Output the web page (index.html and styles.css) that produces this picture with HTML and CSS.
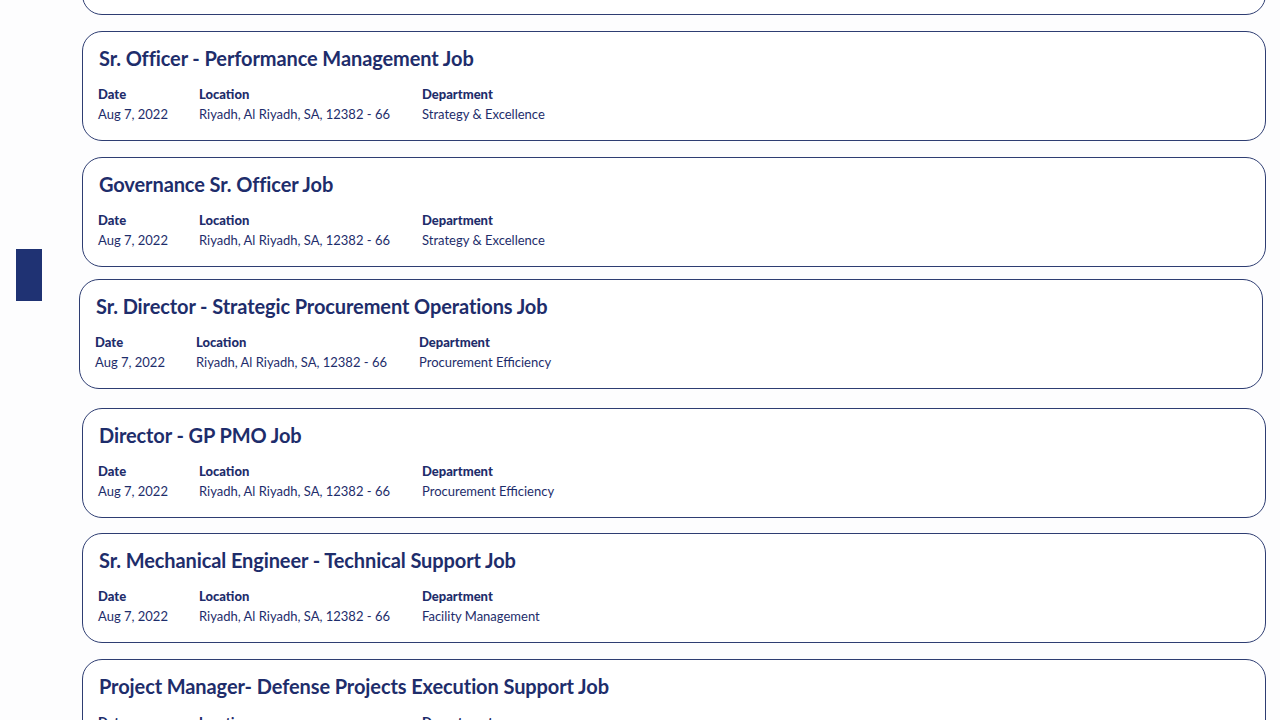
FILE: index.html
```html
<!DOCTYPE html>
<html>
<head>
  <title>Jobs</title>
  <link rel="stylesheet" href="styles.css">
</head>
<body>
  <div class="page">
    <div class="side">
      <div class="side-marker"></div>
    </div>
    <div class="job-list">
      <div class="job-card">
        <h3 class="job-title">Sr. Specialist - Strategy Job</h3>
        <div class="job-meta">
          <div class="meta-col col-date"><div class="meta-label">Date</div><div class="meta-value">Aug 7, 2022</div></div>
          <div class="meta-col col-loc"><div class="meta-label">Location</div><div class="meta-value">Riyadh, Al Riyadh, SA, 12382 - 66</div></div>
          <div class="meta-col"><div class="meta-label">Department</div><div class="meta-value">Strategy &amp; Excellence</div></div>
        </div>
      </div>
      <div class="job-card">
        <h3 class="job-title">Sr. Officer - Performance Management Job</h3>
        <div class="job-meta">
          <div class="meta-col col-date"><div class="meta-label">Date</div><div class="meta-value">Aug 7, 2022</div></div>
          <div class="meta-col col-loc"><div class="meta-label">Location</div><div class="meta-value">Riyadh, Al Riyadh, SA, 12382 - 66</div></div>
          <div class="meta-col"><div class="meta-label">Department</div><div class="meta-value">Strategy &amp; Excellence</div></div>
        </div>
      </div>
      <div class="job-card">
        <h3 class="job-title">Governance Sr. Officer Job</h3>
        <div class="job-meta">
          <div class="meta-col col-date"><div class="meta-label">Date</div><div class="meta-value">Aug 7, 2022</div></div>
          <div class="meta-col col-loc"><div class="meta-label">Location</div><div class="meta-value">Riyadh, Al Riyadh, SA, 12382 - 66</div></div>
          <div class="meta-col"><div class="meta-label">Department</div><div class="meta-value">Strategy &amp; Excellence</div></div>
        </div>
      </div>
      <div class="job-card is-hover">
        <h3 class="job-title">Sr. Director - Strategic Procurement Operations Job</h3>
        <div class="job-meta">
          <div class="meta-col col-date"><div class="meta-label">Date</div><div class="meta-value">Aug 7, 2022</div></div>
          <div class="meta-col col-loc"><div class="meta-label">Location</div><div class="meta-value">Riyadh, Al Riyadh, SA, 12382 - 66</div></div>
          <div class="meta-col"><div class="meta-label">Department</div><div class="meta-value">Procurement Efficiency</div></div>
        </div>
      </div>
      <div class="job-card">
        <h3 class="job-title">Director - GP PMO Job</h3>
        <div class="job-meta">
          <div class="meta-col col-date"><div class="meta-label">Date</div><div class="meta-value">Aug 7, 2022</div></div>
          <div class="meta-col col-loc"><div class="meta-label">Location</div><div class="meta-value">Riyadh, Al Riyadh, SA, 12382 - 66</div></div>
          <div class="meta-col"><div class="meta-label">Department</div><div class="meta-value">Procurement Efficiency</div></div>
        </div>
      </div>
      <div class="job-card">
        <h3 class="job-title">Sr. Mechanical Engineer - Technical Support Job</h3>
        <div class="job-meta">
          <div class="meta-col col-date"><div class="meta-label">Date</div><div class="meta-value">Aug 7, 2022</div></div>
          <div class="meta-col col-loc"><div class="meta-label">Location</div><div class="meta-value">Riyadh, Al Riyadh, SA, 12382 - 66</div></div>
          <div class="meta-col"><div class="meta-label">Department</div><div class="meta-value">Facility Management</div></div>
        </div>
      </div>
      <div class="job-card">
        <h3 class="job-title">Project Manager- Defense Projects Execution Support Job</h3>
        <div class="job-meta">
          <div class="meta-col col-date"><div class="meta-label">Date</div><div class="meta-value">Aug 7, 2022</div></div>
          <div class="meta-col col-loc"><div class="meta-label">Location</div><div class="meta-value">Riyadh, Al Riyadh, SA, 12382 - 66</div></div>
          <div class="meta-col"><div class="meta-label">Department</div><div class="meta-value">Defense Projects</div></div>
        </div>
      </div>
    </div>
  </div>
</body>
</html>
```
FILE: styles.css
```css
/* page frame */
body {
  margin: 0;
  background: #fdfdfe;
  font-family: Lato, "Liberation Sans", sans-serif;
  color: #1e2d6b;
  overflow: hidden;
}
.page {
  display: flex;
  align-items: flex-start;
  height: 720px;
  overflow: hidden;
}

/* left strip with the blue marker */
.side {
  flex: 0 0 82px;
  padding-left: 16px;
  box-sizing: border-box;
}
.side-marker {
  width: 26px;
  height: 52px;
  margin-top: 249px;
  background: #1f3273;
}

/* list of job cards */
.job-list {
  flex: 0 0 1184px;
  display: flex;
  flex-direction: column;
  gap: 15.6px;
  margin-top: -94.6px;
}
.job-card {
  flex: 0 0 110px;
  box-sizing: border-box;
  border: 1px solid #2e3d72;
  border-radius: 20px;
  padding: 15px 15px 0 15px;
  background: #fff;
}
.job-card.is-hover {
  transform: translate(-3px, -3px);
}
.job-title {
  margin: 0 0 15px 1px;
  font-size: 20px;
  line-height: 22px;
  font-weight: 700;
  letter-spacing: -0.1px;
}

/* date / location / department */
.job-meta {
  display: flex;
  font-size: 13px;
  line-height: 20px;
}
.col-date {
  flex: 0 0 101px;
}
.col-loc {
  flex: 0 0 223px;
}
.meta-label {
  font-weight: 900;
}
```
